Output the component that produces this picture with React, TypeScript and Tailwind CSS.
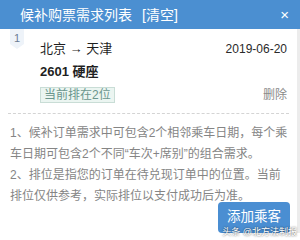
export default function App() {
  const notes = [
    "1、候补订单需求中可包含2个相邻乘车日期，每个乘",
    "车日期可包含2个不同“车次+席别”的组合需求。",
    "2、排位是指您的订单在待兑现订单中的位置。当前",
    "排位仅供参考，实际排位以支付成功后为准。",
  ];

  return (
    <div className="relative h-[240px] w-[300px] overflow-hidden bg-white font-['Liberation_Sans','Noto_Sans_CJK_SC',sans-serif]">
      <header className="flex h-[29px] items-center bg-[#4b8fd1] pl-[20px] pr-[11px] text-white">
        <span className="text-[14px] leading-none">候补购票需求列表</span>
        <span className="ml-[10px] text-[14px] leading-none">[清空]</span>
        <span className="ml-auto text-[15px] leading-none">×</span>
      </header>

      <div className="border-r-[3px] border-[#ececec]">
        <div className="flex px-[10px]">
          <div className="flex h-[20px] w-[14px] justify-center bg-[#eef3f9] pt-[2px] text-[11px] leading-[14px] text-[#6b7c93] [clip-path:polygon(0_0,100%_0,100%_75%,50%_100%,0_75%)]">
            1
          </div>
          <div className="ml-[16px] flex-1">
            <div className="flex items-center justify-between pt-[11px]">
              <span className="text-[13px] leading-[18px] text-[#1f1f1f]">北京 → 天津</span>
              <span className="text-[12px] leading-[18px] text-[#2a2a2a]">2019-06-20</span>
            </div>
            <div className="mt-[5px] text-[13px] font-bold leading-[18px] text-[#1f1f1f]">2601 硬座</div>
            <div className="mt-[6px] flex items-center justify-between">
              <span className="border border-[#c9ddd6] bg-[#ebf5f1] px-[3px] text-[12px] leading-[14px] text-[#6a968d]">
                当前排在2位
              </span>
              <span className="text-[12px] leading-[14px] text-[#8a8a8a]">删除</span>
            </div>
          </div>
        </div>

        <div className="mx-[8px] mt-[10px] border-t border-dashed border-[#d4d4d4]" />

        <div className="px-[10px] pt-[9px] text-[12px] leading-[21px] text-[#858585]">
          {notes.map((line) => (
            <div key={line} className="whitespace-nowrap">
              {line}
            </div>
          ))}
        </div>

        <div className="mt-[-5px] flex justify-end pr-[7px]">
          <button className="h-[31px] w-[72px] rounded-[4px] bg-[#4a8ed2] text-[13.5px] text-white">
            添加乘客
          </button>
        </div>
      </div>

      <span className="absolute bottom-[3px] right-[3px] text-[9px] leading-none text-white [text-shadow:0_0_2px_rgba(0,0,0,0.8)]">
        头条 @北方法制报
      </span>
    </div>
  );
}
